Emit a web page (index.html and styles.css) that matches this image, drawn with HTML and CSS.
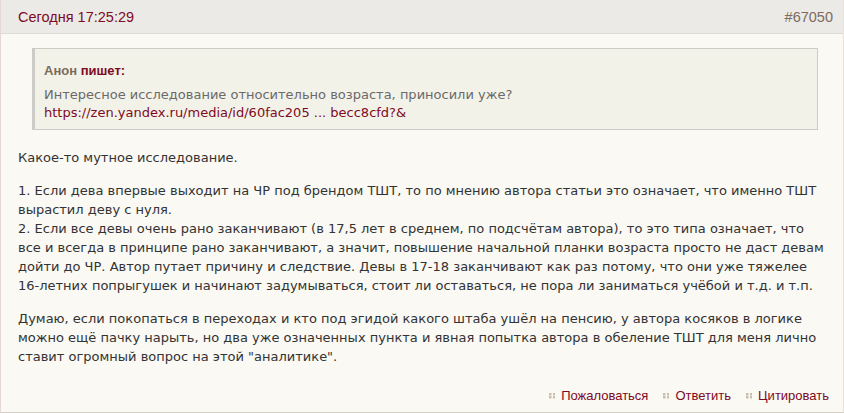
FILE: index.html
```html
<!DOCTYPE html>
<html lang="ru">
<head>
<meta charset="utf-8">
<link rel="stylesheet" href="styles.css">
</head>
<body>
<div class="post">
  <div class="post-head">
    <span class="date">Сегодня 17:25:29</span>
    <span class="num">#67050</span>
  </div>
  <div class="post-body">
    <blockquote class="quote">
      <div class="quote-author"><span class="who">Анон</span> <span class="wrote">пишет:</span></div>
      <div class="quote-text">Интересное исследование относительно возраста, приносили уже?<br><a href="#" class="link">https://zen.yandex.ru/media/id/60fac205 ... becc8cfd?&amp;</a></div>
    </blockquote>
    <div class="text">
      <p>Какое-то мутное исследование.</p>
      <p>1. Если дева впервые выходит на ЧР под брендом ТШТ, то по мнению автора статьи это означает, что именно ТШТ вырастил деву с нуля.<br>2. Если все девы очень рано заканчивают (в 17,5 лет в среднем, по подсчётам автора), то это типа означает, что все и всегда в принципе рано заканчивают, а значит, повышение начальной планки возраста просто не даст девам дойти до ЧР. Автор путает причину и следствие. Девы в 17-18 заканчивают как раз потому, что они уже тяжелее 16-летних попрыгушек и начинают задумываться, стоит ли оставаться, не пора ли заниматься учёбой и т.д. и т.п.</p>
      <p>Думаю, если покопаться в переходах и кто под эгидой какого штаба ушёл на пенсию, у автора косяков в логике можно ещё пачку нарыть, но два уже означенных пункта и явная попытка автора в обеление ТШТ для меня лично ставит огромный вопрос на этой "аналитике".</p>
    </div>
    <div class="actions">
      <a href="#" class="act"><span class="dots"></span>Пожаловаться</a>
      <a href="#" class="act"><span class="dots"></span>Ответить</a>
      <a href="#" class="act"><span class="dots"></span>Цитировать</a>
    </div>
  </div>
</div>
</body>
</html>
```
FILE: styles.css
```css
html, body {
  margin: 0;
  padding: 0;
  background: #faf9f4;
}
.post {
  width: 844px;
  min-height: 413px;
  box-sizing: border-box;
  border-left: 1px solid #e6d8d8;
  border-right: 1px solid #e8e4dc;
  border-bottom: 1px solid #d3cec6;
  background: #faf9f4;
  display: flex;
  flex-direction: column;
}
.post-head {
  flex-shrink: 0;
  height: 34px;
  box-sizing: border-box;
  background: #ebeae6;
  border-bottom: 1px solid #dedcd8;
  display: flex;
  justify-content: space-between;
  align-items: center;
  padding: 0 10px 0 17px;
  font-family: "Liberation Sans", Arial, sans-serif;
  font-size: 14.5px;
}
.date { color: #7e0a24; }
.num { color: #7d6a5c; }
.post-body {
  flex: 1;
  display: flex;
  flex-direction: column;
  padding: 14px 14px 0 17px;
}
.quote {
  margin: 0 11px 0 14px;
  background: #f3f2e9;
  border: 1px solid #cdcbc6;
  border-left: 3px solid #cdcbc6;
  padding: 14px 10px 7px 9px;
  font-family: "DejaVu Sans", Verdana, sans-serif;
  font-size: 13px;
  line-height: 18px;
  color: #6a6a6a;
}
.quote-author {
  font-family: "Liberation Sans", Arial, sans-serif;
  font-weight: bold;
  font-size: 13px;
  line-height: 15px;
  margin-bottom: 8px;
}
.who { color: #7d6a5c; }
.wrote { color: #7e0a24; }
.link { color: #7e0a24; text-decoration: none; }
.text {
  font-family: "DejaVu Sans", Verdana, sans-serif;
  font-size: 13px;
  line-height: 19px;
  color: #333333;
  margin-top: 18px;
}
.text p { margin: 0 0 14px 0; }
.actions {
  margin-top: auto;
  display: flex;
  justify-content: flex-end;
  gap: 15px;
  padding: 0 0 9px 0;
  font-family: "Liberation Sans", Arial, sans-serif;
  font-size: 13px;
}
.act {
  color: #7e0a24;
  text-decoration: none;
  display: flex;
  align-items: center;
}
.dots {
  width: 6px;
  height: 6px;
  margin-right: 6px;
  background:
    linear-gradient(#c9bfb0, #c9bfb0) 0 0 / 2.5px 2.5px no-repeat,
    linear-gradient(#c9bfb0, #c9bfb0) 3.5px 0 / 2.5px 2.5px no-repeat,
    linear-gradient(#c9bfb0, #c9bfb0) 0 3.5px / 2.5px 2.5px no-repeat,
    linear-gradient(#c9bfb0, #c9bfb0) 3.5px 3.5px / 2.5px 2.5px no-repeat;
}
```
